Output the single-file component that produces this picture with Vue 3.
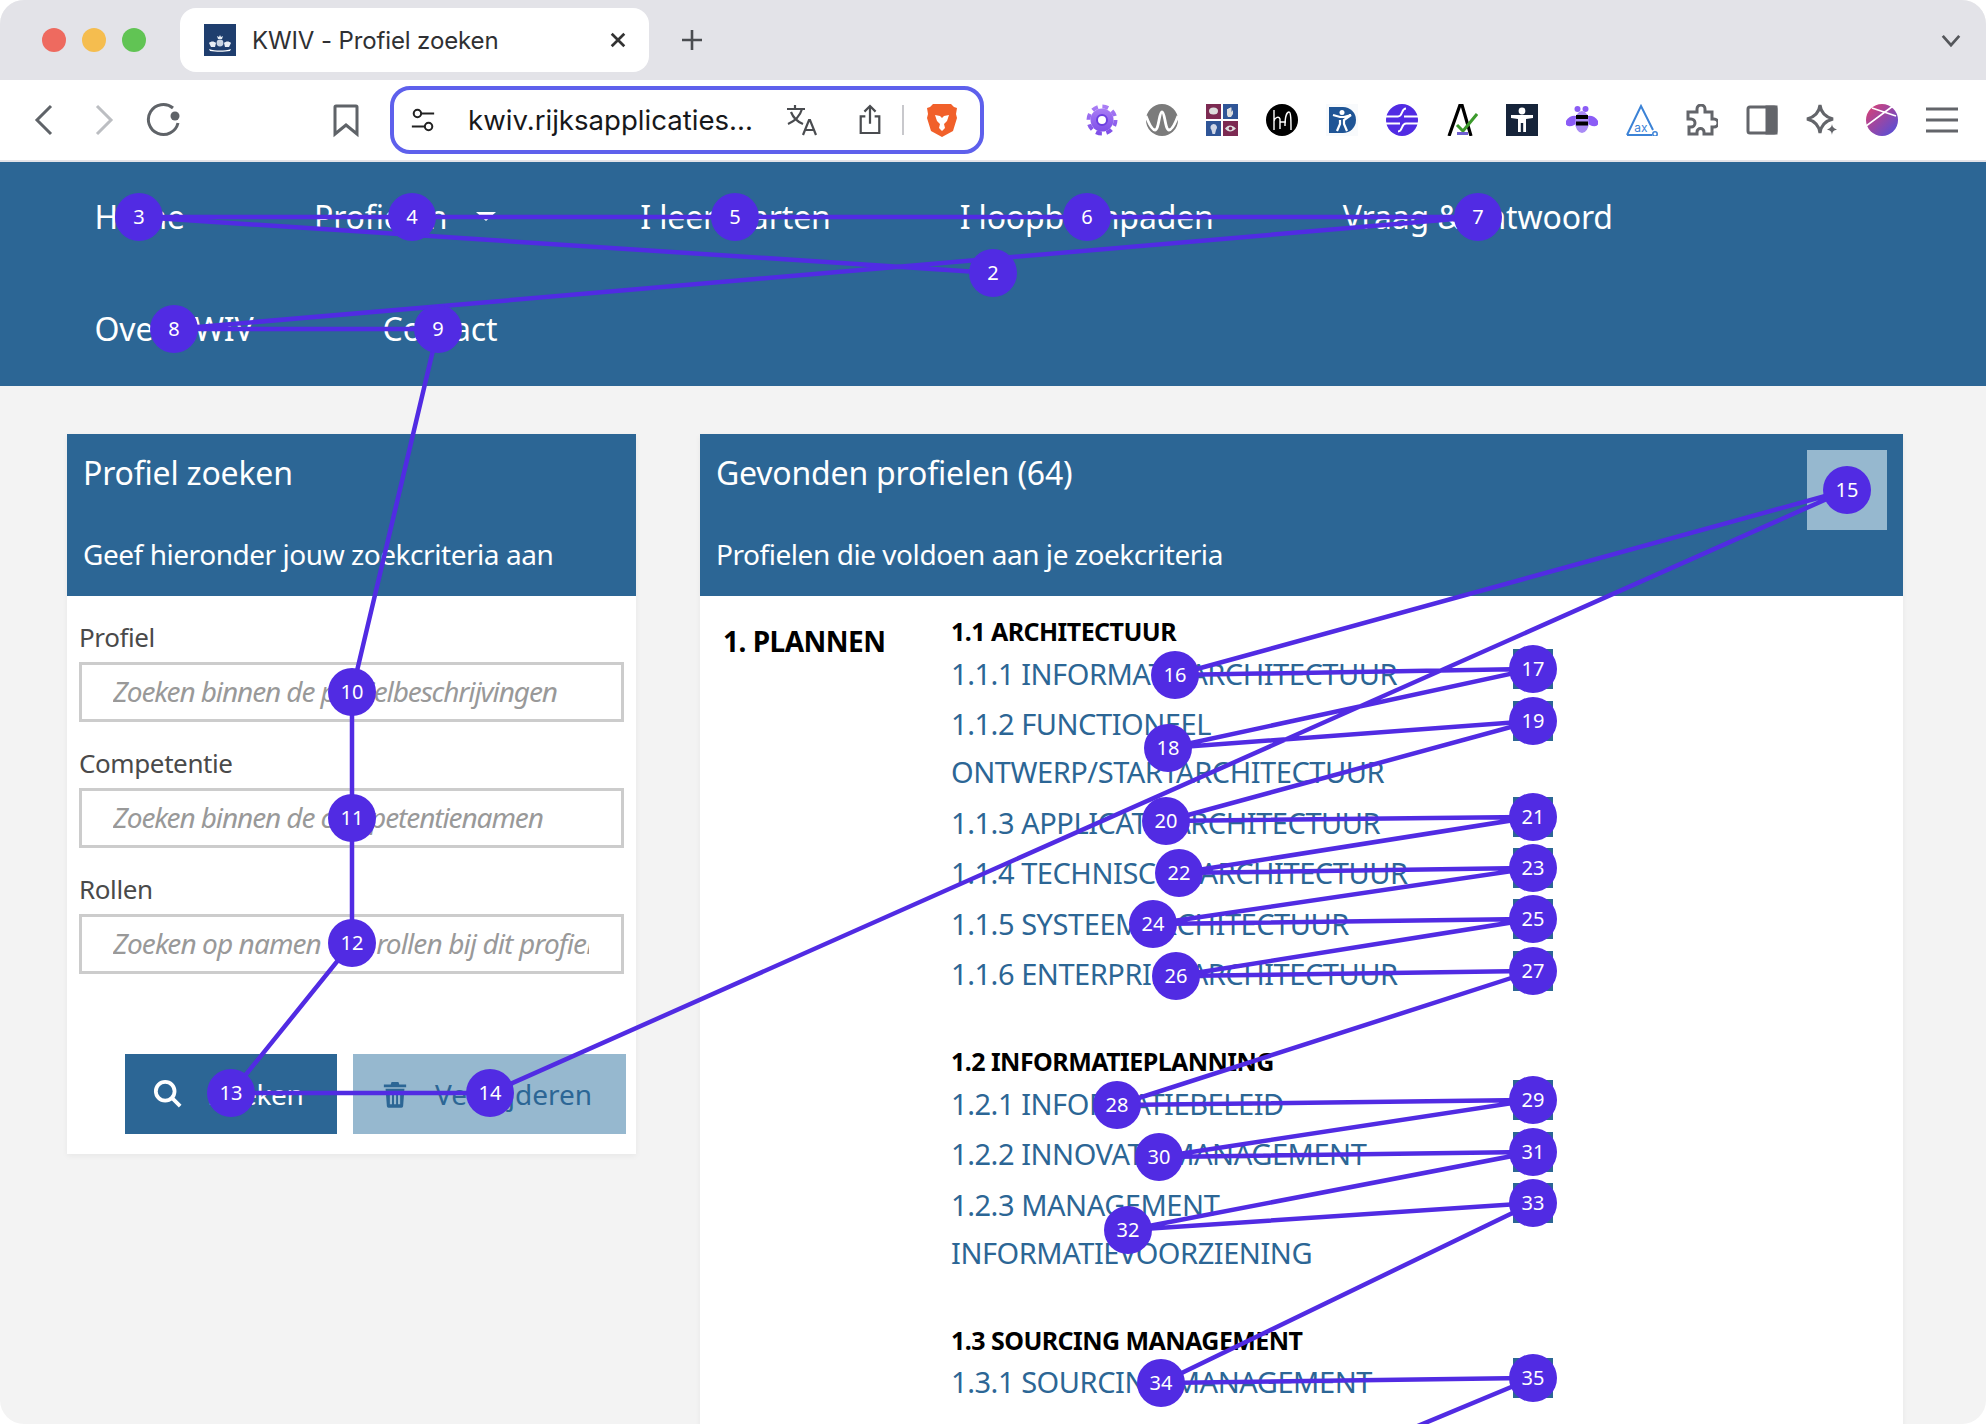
<template>
  <div class="window">
    <div class="tabstrip">
      <div class="lights">
        <span class="light red"></span>
        <span class="light yellow"></span>
        <span class="light green"></span>
      </div>
      <div class="tab">
        <svg class="favicon" viewBox="0 0 32 32">
          <rect width="32" height="32" fill="#1f3e6e" />
          <path d="M14 15l-1-3 2 1 1-2 1 2 2-1-1 3z" fill="#e8edf4" />
          <circle cx="16" cy="19" r="3.4" fill="#c9d4e3" />
          <path d="M5 19c2-2 5-2 7 0l-1 4H7zM27 19c-2-2-5-2-7 0l1 4h4z" fill="#e8edf4" />
          <path d="M5 25c6 2 16 2 22 0l-1 2c-6 1-14 1-20 0z" fill="#fff" />
        </svg>
        <span class="tab-title">KWIV - Profiel zoeken</span>
        <svg class="tab-close" viewBox="0 0 20 20"><path d="M3 3l14 14M17 3L3 17" /></svg>
      </div>
      <svg class="tab-plus" viewBox="0 0 24 24"><path d="M12 2v20M2 12h20" /></svg>
      <svg class="tab-chevron" viewBox="0 0 24 16"><path d="M3 3l9 10 9-10" /></svg>
    </div>

    <div class="toolbar">
      <svg class="tool back" viewBox="0 0 36 36"><path d="M25 4L11 18l14 14" /></svg>
      <svg class="tool forward" viewBox="0 0 36 36"><path d="M11 4l14 14-14 14" /></svg>
      <svg class="tool reload" viewBox="0 0 36 36">
        <path d="M27 6A15 15 0 1 0 32 21" />
        <circle cx="29" cy="14" r="4.5" fill="#5f6368" stroke="none" />
      </svg>
      <svg class="tool bookmark" viewBox="0 0 36 36"><path d="M8 4h20a1 1 0 0 1 1 1v27l-11-9-11 9V5a1 1 0 0 1 1-1z" /></svg>

      <div class="urlbar">
        <svg class="url-tune" viewBox="0 0 28 28">
          <circle cx="8" cy="7" r="4" /><path d="M12 7h14M2 21h14" /><circle cx="20" cy="21" r="4" />
        </svg>
        <span class="url-text">kwiv.rijksapplicaties...</span>
        <svg class="url-translate" viewBox="0 0 34 34">
          <path d="M2 6h18M10 2v4M17 6c-2 7-7 12-14 15M6 9c2 5 7 10 12 12" />
          <path d="M18 32l6-15h1l6 15M20 27h9" />
        </svg>
        <svg class="url-share" viewBox="0 0 28 36">
          <path d="M14 22V3M8 9l6-6 6 6M9 14H4v18h20V14h-5" />
        </svg>
        <span class="url-divider"></span>
        <svg class="url-brave" viewBox="0 0 32 36">
          <path d="M7 2h18l3 3 3 1-1 6 1 4-4 13-11 6-11-6-4-13 1-4-1-6 3-1z" fill="#f1602a" />
          <path d="M9 13l5 1 2 2 2-2 5-1-2 6-3 3 1 4-3 3-3-3 1-4-3-3z" fill="#fff" />
        </svg>
      </div>

      <div class="extensions">
        <svg viewBox="0 0 32 32">
          <defs>
            <linearGradient id="gearFill" x1="0" y1="0" x2="0" y2="1">
              <stop offset="0" stop-color="#a97df5" /><stop offset="1" stop-color="#7f4fe8" />
            </linearGradient>
            <linearGradient id="orbFill" x1="0" y1="0" x2="1" y2="1">
              <stop offset="0" stop-color="#e0406f" /><stop offset="1" stop-color="#4b4fe0" />
            </linearGradient>
          </defs>
          <circle cx="16" cy="16" r="11.5" fill="url(#gearFill)" />
          <circle cx="16" cy="16" r="13.5" fill="none" stroke="url(#gearFill)" stroke-width="4" stroke-dasharray="6 4.6" />
          <circle cx="16" cy="16" r="5" fill="#fff" stroke="#6d3fe0" stroke-width="2" />
        </svg>
        <svg viewBox="0 0 32 32">
          <circle cx="16" cy="16" r="16" fill="#7b7b7b" />
          <path d="M0 12c3 8 6 14 9 14 4 0 4-18 7-18s3 18 7 18c3 0 6-6 9-14" fill="none" stroke="#fff" stroke-width="2.8" />
        </svg>
        <svg viewBox="0 0 32 32">
          <rect width="15" height="15" fill="#7c2a52" /><rect x="17" width="15" height="15" fill="#2f5597" />
          <rect y="17" width="15" height="15" fill="#2f5597" /><rect x="17" y="17" width="15" height="15" fill="#7c2a52" />
          <ellipse cx="7.5" cy="7" rx="4.5" ry="3.6" fill="#ddd" />
          <path d="M21 11V5h1.5v3-4H24v4-4.5h1.5V8l1.5-2V10l-2 3h-3z" fill="#ddd" />
          <path d="M7.5 20a3.5 3.5 0 0 0-2 6l1 4h2.500l1-4a3.5 3.5 0 0 0-2.500-6z" fill="#cfd6e6" />
          <path d="M19 24.5c3-4 7-4 11 0-4 4-8 4-11 0z" fill="#ddd" /><circle cx="24.5" cy="24.5" r="1.8" fill="#7c2a52" />
        </svg>
        <svg viewBox="0 0 32 32">
          <circle cx="16" cy="16" r="16" fill="#000" />
          <path d="M8 6v20M8 17c1-4 5-5 6-2v10M14 18h6M19 22c0-10 2-14 4-14s2 9 2 18" fill="none" stroke="#fff" stroke-width="1.4" />
        </svg>
        <svg viewBox="0 0 32 32">
          <rect width="32" height="32" fill="#f8fafc" />
          <path d="M3 3h14a13 13 0 0 1 0 26H3z" fill="#1f5596" />
          <circle cx="16" cy="8.5" r="2.5" fill="#fff" />
          <path d="M7 11l7 2h4l7-2-7 5v4l3 7M14 16v4l-3 7" fill="none" stroke="#fff" stroke-width="2.2" />
        </svg>
        <svg viewBox="0 0 32 32">
          <circle cx="16" cy="16" r="16" fill="#512be3" />
          <path d="M0 12.5h12c5 0 3-8 8-8M32 19.5H20c-5 0-3 8-8 8M0 19.5h14M32 12.5H18" fill="none" stroke="#fff" stroke-width="2" />
        </svg>
        <svg viewBox="0 0 32 32">
          <path d="M3 32L14 1h2l9 31" fill="none" stroke="#000" stroke-width="3.2" />
          <path d="M11 21l6 6 14-17" fill="none" stroke="#3c9a2c" stroke-width="3" />
          <rect x="11" y="28" width="11" height="3" fill="#6d5fd0" />
        </svg>
        <svg viewBox="0 0 32 32">
          <rect width="32" height="32" fill="#16243a" />
          <circle cx="16" cy="7" r="3.4" fill="#fff" />
          <path d="M5 11h22v3l-7 1v13h-2.800v-9h-2.400v9H12V15l-7-1z" fill="#fff" />
        </svg>
        <svg viewBox="0 0 32 32">
          <circle cx="11.5" cy="5" r="3" fill="#8b5cf6" /><circle cx="19.5" cy="5" r="3" fill="#8b5cf6" />
          <ellipse cx="6" cy="17" rx="7" ry="4.5" transform="rotate(-30 6 17)" fill="#8b5cf6" />
          <ellipse cx="26" cy="17" rx="7" ry="4.5" transform="rotate(30 26 17)" fill="#8b5cf6" />
          <ellipse cx="16" cy="18" rx="7" ry="11" fill="#a98bf5" />
          <rect x="10" y="11" width="12" height="4" fill="#000" /><rect x="10" y="17.5" width="12" height="4" fill="#000" />
        </svg>
        <svg viewBox="0 0 32 32">
          <path d="M1 31L15 2l12 24M1 31h25" fill="none" stroke="#3b82d6" stroke-width="2" />
          <circle cx="29" cy="30" r="2.2" fill="#fff" stroke="#3b82d6" stroke-width="1.5" />
          <text x="15" y="28" class="ax-label">ax</text>
        </svg>
        <svg class="gray" viewBox="1 0 32 32">
          <path d="M12 5a4 4 0 0 1 8 0v3h7v7h2a4 4 0 0 1 0 8h-2v7h-8v-2a3.5 3.5 0 0 0-7 0v2H4v-7h2a4 4 0 0 0 0-8H3V8h9z" />
        </svg>
        <svg class="gray" viewBox="0 0 32 32">
          <rect x="2" y="3" width="28" height="26" rx="2" />
          <rect x="21" y="3" width="9" height="26" fill="#63656a" />
        </svg>
        <svg class="gray" viewBox="0 0 32 32">
          <path d="M14 1c1 8 5 12 13 14-8 2-12 6-13 14-1-8-5-12-13-14 8-2 12-6 13-14z" />
          <path d="M26 20c.5 3 1.500 4 5 5.500-3.500 1-4.500 2-5 5.500-.500-3.500-1.500-4.500-5-5.500 3.500-1.500 4.500-2.500 5-5.500z" fill="#63656a" stroke="none" />
        </svg>
        <svg viewBox="0 0 32 32">
          <circle cx="16" cy="16" r="16" fill="url(#orbFill)" />
          <path d="M6 4l24 8M0 22L27 2" fill="none" stroke="#fff" stroke-width="1.6" />
        </svg>
        <svg class="gray" viewBox="0 0 32 32"><path d="M0 5h32M0 16h32M0 27h32" /></svg>
      </div>
    </div>

    <nav class="mainnav">
      <a v-for="item in navItems" :key="item.label" class="navlink">
        {{ item.label }}
        <span v-if="item.caret" class="caret"></span>
      </a>
    </nav>

    <main class="content">
      <section class="panel search-panel">
        <header class="panel-head">
          <h2>Profiel zoeken</h2>
          <p>Geef hieronder jouw zoekcriteria aan</p>
        </header>
        <form class="search-form" @submit.prevent>
          <div v-for="field in fields" :key="field.label" class="field">
            <label>{{ field.label }}</label>
            <input type="text" :placeholder="field.placeholder" />
          </div>
          <div class="actions">
            <button class="btn primary">
              <svg viewBox="0 0 32 32"><circle cx="13" cy="13" r="10" /><path d="M21 21l8 8" /></svg>
              Zoeken
            </button>
            <button class="btn secondary">
              <svg viewBox="0 0 28 32">
                <path d="M1 5h8l1-3h8l1 3h8v3H1zM3 10h22l-1.500 20a2 2 0 0 1-2 2h-15a2 2 0 0 1-2-2zM8 13v15h2.500V13zM12.800 13v15h2.500V13zM17.500 13v15H20V13z" fill-rule="evenodd" />
              </svg>
              Verwijderen
            </button>
          </div>
        </form>
      </section>

      <section class="panel results-panel">
        <header class="panel-head">
          <h2>Gevonden profielen (64)</h2>
          <p>Profielen die voldoen aan je zoekcriteria</p>
          <span class="head-toggle"></span>
        </header>
        <div class="results">
          <h3 class="domain">1. PLANNEN</h3>
          <div class="groups">
            <div v-for="group in groups" :key="group.title" class="group">
              <h4>{{ group.title }}</h4>
              <a v-for="link in group.links" :key="link" class="profile-link">{{ link }}</a>
            </div>
          </div>
        </div>
      </section>
    </main>

    <!-- tab order overlay -->
    <span v-for="s in squares" :key="s" class="fav-square" :style="{ top: s - 20 + 'px' }"></span>
    <svg class="tab-order" viewBox="0 0 1986 1424">
      <polyline :points="linePoints" />
      <g v-for="b in badges" :key="b.n">
        <circle :cx="b.x" :cy="b.y" r="24" />
        <text :x="b.x" :y="b.y + 7">{{ b.n }}</text>
      </g>
    </svg>
  </div>
</template>

<script setup>
const navItems = [
  { label: 'Home' },
  { label: 'Profielen', caret: true },
  { label: 'I leerkaarten' },
  { label: 'I loopbaanpaden' },
  { label: 'Vraag & antwoord' },
  { label: 'Over KWIV' },
  { label: 'Contact' }
]

const fields = [
  { label: 'Profiel', placeholder: 'Zoeken binnen de profielbeschrijvingen' },
  { label: 'Competentie', placeholder: 'Zoeken binnen de competentienamen' },
  { label: 'Rollen', placeholder: 'Zoeken op namen van rollen bij dit profiel' }
]

const groups = [
  {
    title: '1.1 ARCHITECTUUR',
    links: [
      '1.1.1 INFORMATIEARCHITECTUUR',
      '1.1.2 FUNCTIONEEL ONTWERP/STARTARCHITECTUUR',
      '1.1.3 APPLICATIEARCHITECTUUR',
      '1.1.4 TECHNISCHE ARCHITECTUUR',
      '1.1.5 SYSTEEMARCHITECTUUR',
      '1.1.6 ENTERPRISE ARCHITECTUUR'
    ]
  },
  {
    title: '1.2 INFORMATIEPLANNING',
    links: [
      '1.2.1 INFORMATIEBELEID',
      '1.2.2 INNOVATIEMANAGEMENT',
      '1.2.3 MANAGEMENT INFORMATIEVOORZIENING'
    ]
  },
  {
    title: '1.3 SOURCING MANAGEMENT',
    links: ['1.3.1 SOURCING MANAGEMENT']
  }
]

const badges = [
  { n: 2, x: 993, y: 273 }, { n: 3, x: 139, y: 217 }, { n: 4, x: 412, y: 217 },
  { n: 5, x: 735, y: 217 }, { n: 6, x: 1087, y: 217 }, { n: 7, x: 1478, y: 217 },
  { n: 8, x: 174, y: 329 }, { n: 9, x: 438, y: 329 }, { n: 10, x: 352, y: 692 },
  { n: 11, x: 352, y: 818 }, { n: 12, x: 352, y: 943 }, { n: 13, x: 231, y: 1093 },
  { n: 14, x: 490, y: 1093 }, { n: 15, x: 1847, y: 490 }, { n: 16, x: 1175, y: 675 },
  { n: 17, x: 1533, y: 669 }, { n: 18, x: 1168, y: 748 }, { n: 19, x: 1533, y: 721 },
  { n: 20, x: 1166, y: 821 }, { n: 21, x: 1533, y: 817 }, { n: 22, x: 1179, y: 873 },
  { n: 23, x: 1533, y: 868 }, { n: 24, x: 1153, y: 924 }, { n: 25, x: 1533, y: 919 },
  { n: 26, x: 1176, y: 976 }, { n: 27, x: 1533, y: 971 }, { n: 28, x: 1117, y: 1105 },
  { n: 29, x: 1533, y: 1100 }, { n: 30, x: 1159, y: 1157 }, { n: 31, x: 1533, y: 1152 },
  { n: 32, x: 1128, y: 1230 }, { n: 33, x: 1533, y: 1203 }, { n: 34, x: 1161, y: 1383 },
  { n: 35, x: 1533, y: 1378 }
]

const linePoints = badges.map(b => `${b.x},${b.y}`).join(' ') + ' 1240,1500'
const squares = badges.filter(b => b.x === 1533).map(b => b.y)
</script>

<style>
html, body {
  margin: 0;
  background: #fff;
}
</style>

<style scoped>
.window {
  position: relative;
  width: 1986px;
  height: 1424px;
  overflow: hidden;
  border-radius: 24px;
  background: #f3f3f3;
  font-family: "Noto Sans", sans-serif;
}

.tabstrip {
  display: flex;
  align-items: center;
  height: 80px;
  background: #e3e3e8;
}

.lights {
  display: flex;
  gap: 16px;
  padding-left: 42px;
}

.light {
  width: 24px;
  height: 24px;
  border-radius: 50%;
}

.red { background: #ee6a5f; }
.yellow { background: #f5bd4f; }
.green { background: #61c454; }

.tab {
  display: flex;
  align-items: center;
  width: 469px;
  height: 64px;
  margin-left: 34px;
  box-sizing: border-box;
  padding-left: 24px;
  background: #fff;
  border-radius: 16px;
}

.favicon {
  width: 32px;
  height: 32px;
}

.tab-title {
  margin-left: 16px;
  font-family: Inter, sans-serif;
  font-size: 24px;
  letter-spacing: -0.12px;
  color: #2f3033;
}

.tab-close {
  width: 18px;
  height: 18px;
  margin-left: auto;
  margin-right: 22px;
  fill: none;
  stroke: #333;
  stroke-width: 3;
}

.tab-plus {
  width: 24px;
  height: 24px;
  margin-left: 31px;
  fill: none;
  stroke: #4a4c50;
  stroke-width: 2.6;
}

.tab-chevron {
  width: 22px;
  height: 15px;
  margin-left: auto;
  margin-right: 24px;
  fill: none;
  stroke: #55575b;
  stroke-width: 3;
}

.toolbar {
  display: flex;
  align-items: center;
  height: 80px;
  padding-left: 26px;
  background: #fff;
  border-bottom: 2px solid #e3e3e8;
}

.tool {
  width: 36px;
  height: 36px;
  margin-right: 24px;
  fill: none;
  stroke: #5f6368;
  stroke-width: 3;
}

.forward { stroke: #bcbec2; }

.bookmark { margin-left: 122px; margin-right: 0; }

.urlbar {
  display: flex;
  align-items: center;
  width: 594px;
  height: 68px;
  margin-left: 26px;
  box-sizing: border-box;
  border: 4px solid #5e60ec;
  border-radius: 20px;
}

.url-tune {
  width: 26px;
  height: 26px;
  margin-left: 16px;
  fill: none;
  stroke: #222;
  stroke-width: 2.2;
}

.url-text {
  width: 290px;
  margin-left: 32px;
  font-family: Inter, sans-serif;
  font-size: 27.6px;
  color: #17181a;
  white-space: nowrap;
}

.url-translate {
  width: 34px;
  height: 34px;
  margin-left: 27px;
  fill: none;
  stroke: #4a4c50;
  stroke-width: 2.2;
}

.url-share {
  width: 26px;
  height: 34px;
  margin-left: 38px;
  fill: none;
  stroke: #4a4c50;
  stroke-width: 2.4;
}

.url-divider {
  width: 2px;
  height: 30px;
  margin-left: 19px;
  background: #c8c8cc;
}

.url-brave {
  width: 32px;
  height: 36px;
  margin-left: 22px;
}

.extensions {
  display: flex;
  align-items: center;
  gap: 28px;
  margin-left: 102px;
}

.extensions svg {
  width: 32px;
  height: 32px;
  flex: none;
}

.extensions .gray {
  fill: none;
  stroke: #63656a;
  stroke-width: 3;
}

.ax-label {
  font-family: Inter, sans-serif;
  font-size: 12px;
  fill: #3b82d6;
  text-anchor: middle;
}

.mainnav {
  display: flex;
  flex-wrap: wrap;
  padding: 0 280px 0 30px;
  background: #2c6695;
}

.navlink {
  display: flex;
  align-items: center;
  box-sizing: border-box;
  height: 112px;
  padding: 0 64.5px 3px;
  font-size: 32px;
  letter-spacing: -0.15px;
  color: #fff;
  white-space: nowrap;
}

.caret {
  width: 0;
  height: 0;
  margin-left: 29px;
  margin-right: 15px;
  border-left: 10px solid transparent;
  border-right: 10px solid transparent;
  border-top: 9px solid #fff;
}

.content {
  display: flex;
  align-items: flex-start;
  gap: 64px;
  padding: 48px 0 0 67px;
}

.panel {
  background: #fff;
  box-shadow: 0 2px 6px rgba(0, 0, 0, 0.05);
}

.search-panel {
  width: 569px;
  height: 720px;
}

.results-panel {
  width: 1203px;
  height: 1000px;
}

.panel-head {
  position: relative;
  box-sizing: border-box;
  height: 162px;
  padding: 18px 16px 0;
  background: #2c6695;
  color: #fff;
}

.panel-head h2 {
  margin: 0;
  font-size: 32px;
  font-weight: 400;
  line-height: 42px;
  letter-spacing: -0.2px;
}

.panel-head p {
  margin: 39px 0 0;
  font-size: 28px;
  line-height: 42px;
  letter-spacing: -0.45px;
}

.head-toggle {
  position: absolute;
  top: 16px;
  right: 16px;
  width: 80px;
  height: 80px;
  background: #96b8cf;
}

.search-form {
  padding: 22px 12px 0;
}

.field {
  height: 126px;
}

.field label {
  display: block;
  font-size: 26px;
  line-height: 38px;
  letter-spacing: -0.4px;
  color: #4a4a4a;
}

.field input {
  display: block;
  box-sizing: border-box;
  width: 545px;
  height: 60px;
  margin-top: 6px;
  padding: 0 32px 2px 31px;
  border: 3px solid #ccc;
  background: #fff;
  outline: none;
  font-family: inherit;
  font-size: 28px;
  letter-spacing: -1.1px;
}

.field:nth-child(3) input {
  letter-spacing: -0.9px;
}

.field input::placeholder {
  font-style: italic;
  color: #999;
  opacity: 1;
}

.actions {
  display: flex;
  gap: 16px;
  margin-top: 58px;
  margin-left: 46px;
}

.btn {
  display: flex;
  flex: none;
  align-items: center;
  height: 80px;
  border: none;
  font-family: inherit;
  font-size: 28px;
}

.btn svg {
  flex: none;
}

.primary {
  width: 212px;
  padding-left: 28px;
  gap: 26px;
  background: #2c6695;
  color: #fff;
  letter-spacing: -0.4px;
}

.primary svg {
  width: 30px;
  height: 30px;
  fill: none;
  stroke: #fff;
  stroke-width: 4;
}

.secondary {
  width: 273px;
  padding-left: 30px;
  gap: 28px;
  background: #96b8cf;
  color: #2c6695;
}

.secondary svg {
  width: 24px;
  height: 28px;
  fill: #2c6695;
}

.results {
  display: flex;
  padding: 19px 0 0 23px;
}

.domain {
  flex: none;
  width: 228px;
  margin: 5px 0 0;
  font-size: 28px;
  font-weight: 700;
  line-height: 42px;
  letter-spacing: -0.5px;
  color: #000;
}

.group {
  width: 480px;
  margin-bottom: 47px;
}

.group h4 {
  margin: 0;
  font-size: 25px;
  font-weight: 700;
  line-height: 32px;
  letter-spacing: -0.55px;
  color: #000;
}

.profile-link {
  display: block;
  margin: 2.5px 0;
  font-size: 29px;
  line-height: 48px;
  letter-spacing: -0.45px;
  color: #2c6695;
}

.fav-square {
  position: absolute;
  left: 1513px;
  width: 40px;
  height: 40px;
  background: #2c6695;
}

.tab-order {
  position: absolute;
  inset: 0;
  width: 1986px;
  height: 1424px;
  pointer-events: none;
}

.tab-order polyline {
  fill: none;
  stroke: #512be3;
  stroke-width: 4.5;
}

.tab-order circle {
  fill: #512be3;
}

.tab-order text {
  font-family: "Noto Sans", sans-serif;
  font-size: 20px;
  fill: #fff;
  text-anchor: middle;
}
</style>
